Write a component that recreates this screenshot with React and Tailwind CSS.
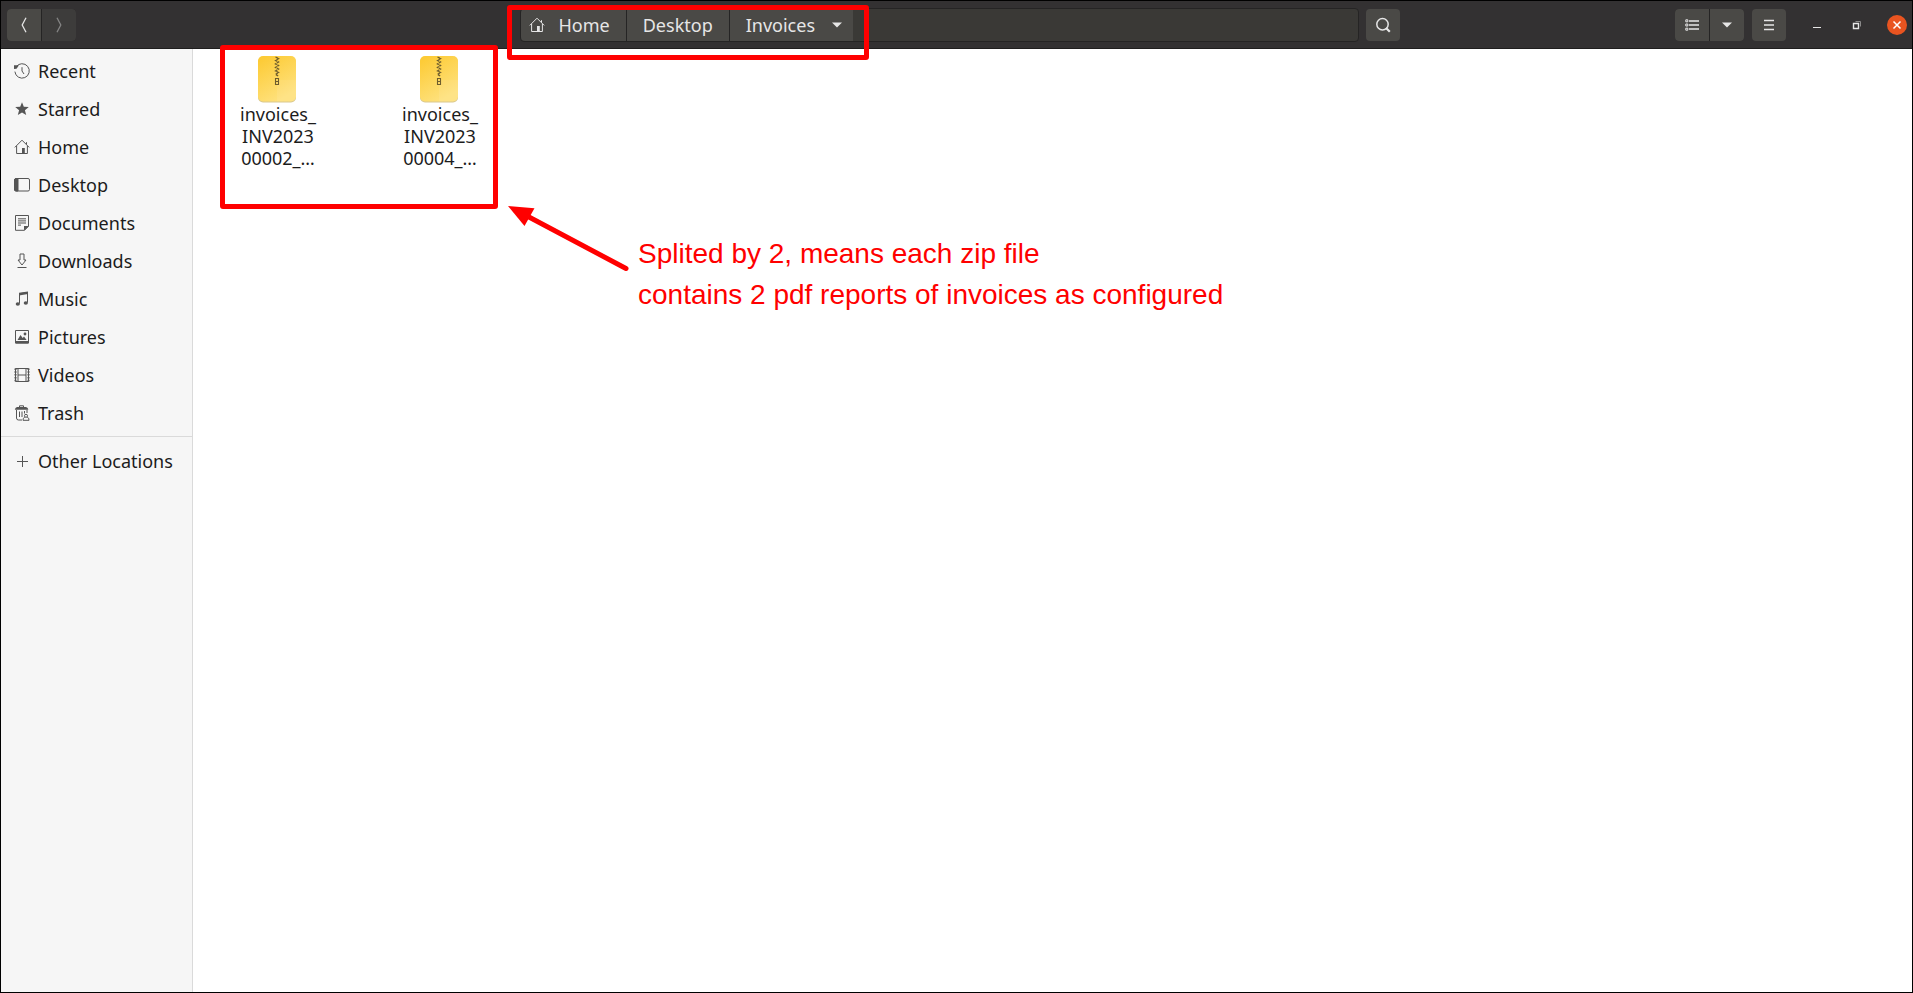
import React from "react";

const Svg = ({ children, size = 16, className = "" }) => (
  <svg width={size} height={size} viewBox="0 0 16 16" fill="none" stroke="currentColor" className={`shrink-0 ${className}`} aria-hidden="true">
    {children}
  </svg>
);

const HouseIcon = () => (
  <Svg>
    <path d="M.8 8.4 8 1.2l7.2 7.2M2.6 7v7.5h10.8V7M12.5 5.4V3.2" />
    <path d="M8 9h2.8v5.5H8z" fill="currentColor" stroke="none" />
  </Svg>
);

const icons = {
  Recent: (
    <Svg>
      <path d="M2.1 3.9A7.2 7.2 0 1 1 .9 8.6M8 4.2V8l2 3" />
      <path d="M0 2.2h5L2.5 5.8 0 6z" fill="currentColor" stroke="none" />
    </Svg>
  ),
  Starred: (
    <Svg>
      <path d="m8 1.2 1.8 4.6 5 .3-3.9 3.1 1.3 4.9L8 11.4l-4.2 2.7 1.3-4.9L1.2 6.1l5-.3z" fill="currentColor" stroke="none" />
    </Svg>
  ),
  Home: <HouseIcon />,
  Desktop: (
    <Svg>
      <rect x=".5" y="1.5" width="15" height="12.5" rx="1.5" />
      <path d="M.5 2.5 1.5 1.5H4v12.5H1.5L.5 13z" fill="currentColor" />
    </Svg>
  ),
  Documents: (
    <Svg>
      <path d="M1.5.5h13v10.8l-4 4h-9zM4 3.8h8M4 5.9h8M4 8h8M4 10.1h3" />
      <path d="M10 15.5V11h4.8z" fill="currentColor" stroke="none" />
    </Svg>
  ),
  Downloads: (
    <Svg>
      <path d="M6 1h4v6h2L8 12 4 7h2zM3.5 14.5h9" />
    </Svg>
  ),
  Music: (
    <Svg>
      <path d="M5.5 12.5V2.7l8-1.2v10" />
      <path d="M5 1.8 14 .5v2.6L5 4.4z" fill="currentColor" stroke="none" />
      <ellipse cx="3.8" cy="13" rx="2.1" ry="1.8" fill="currentColor" stroke="none" />
      <ellipse cx="11.8" cy="12" rx="2.1" ry="1.8" fill="currentColor" stroke="none" />
    </Svg>
  ),
  Pictures: (
    <Svg>
      <path d="M1.5 1.5h13v12.5h-13z" />
      <path d="M1.5 12h13v2.5h-13zM3.5 11l3-5 2.2 3L10 7.6l2.6 3.4z" fill="currentColor" stroke="none" />
      <circle cx="11" cy="5" r="1.4" fill="currentColor" stroke="none" />
    </Svg>
  ),
  Videos: (
    <Svg>
      <path d="M1.5 1.5h13v13h-13zM4 1.5v13M12 1.5v13M4 8h8" />
      <path d="M1.5 1.5v13M14.5 1.5v13" strokeWidth="2" strokeDasharray="1.5 1.3" />
    </Svg>
  ),
  Trash: (
    <Svg>
      <path d="M2.5 5v8q0 2 2 2H8M5.5 2V.8h4V2M5.5 6.5V12M8 6.5V12M10.5 6v2.5M13 5v3" />
      <path d="M.8 4.8 1.5 3 3 2h9l1.7 1 .6 1.8z" fill="currentColor" stroke="none" />
      <circle cx="12" cy="10.8" r="1.5" />
      <path d="M10.8 12.2Q8.800 12.800 9 15.300h6q.3-2.500-1.800-3.100" />
    </Svg>
  ),
  "Other Locations": (
    <Svg>
      <path d="M8.500 3v11M3 8.500h11" />
    </Svg>
  ),
};

const places = ["Recent", "Starred", "Home", "Desktop", "Documents", "Downloads", "Music", "Pictures", "Videos", "Trash"];

const Place = ({ name }) => (
  <li>
    <a href="#" className="flex h-[38px] items-center gap-2 pl-[13px] text-lg text-[#1c1c1c]">
      <span className="text-[#555]">{icons[name]}</span>
      <span className="whitespace-nowrap">{name}</span>
    </a>
  </li>
);

const BarButton = ({ label, className = "", tone = "bg-[#4a4946] text-[#e6e6e6]", children }) => (
  <button aria-label={label} className={`flex h-8 w-[34px] items-center justify-center ${tone} ${className}`}>
    {children}
  </button>
);

const DownArrow = () => (
  <Svg>
    <path d="M3 5.500h10L8 10.500z" fill="currentColor" stroke="none" />
  </Svg>
);

const Header = () => (
  <header className="grid h-12 grid-cols-[1fr_minmax(0,880px)_1fr] items-center border-b border-[#1f1e1e] bg-[#333132] pt-px pl-[6px]">
    <div className="flex">
      <div className="flex gap-px rounded bg-[#252424]">
        <BarButton label="Back" className="rounded-l">
          <Svg><path d="M10 .8 6.200 8l3.800 7.200" strokeWidth="1.300" /></Svg>
        </BarButton>
        <BarButton label="Forward" className="rounded-r" tone="bg-[#3d3c3b] text-[#858585]">
          <Svg><path d="M6 .8 9.800 8 6 15.200" strokeWidth="1.300" /></Svg>
        </BarButton>
      </div>
    </div>

    <div className="flex items-center gap-[7px]">
      <nav aria-label="Path" className="relative flex h-[34px] min-w-0 flex-1 rounded border border-[#252424] bg-[#3a3936] text-lg text-[#e6e6e6]">
        <div className="flex gap-px rounded-l bg-[#252424]">
          <button className="flex items-center gap-[14px] rounded-l bg-[#4a4946] pr-4 pl-2">
            <HouseIcon />
            <span>Home</span>
          </button>
          <button className="bg-[#4a4946] px-4">Desktop</button>
          <button className="flex items-center gap-[14px] bg-[#4a4946] pr-2 pl-4">
            <span>Invoices</span>
            <DownArrow />
          </button>
        </div>
        <div className="pointer-events-none absolute -top-1 -left-[14px] h-[55px] w-[362px] rounded-[3px] border-[5px] border-[#ff0000]" />
      </nav>
      <BarButton label="Search" className="rounded">
        <Svg>
          <circle cx="7.500" cy="7.200" r="5.700" strokeWidth="1.500" />
          <path d="m11 11 3.800 3.800" strokeWidth="2.200" />
        </Svg>
      </BarButton>
    </div>

    <div className="flex items-center justify-end pr-[5px]">
      <div className="flex gap-px rounded bg-[#252424]">
        <BarButton label="List view" className="rounded-l">
          <Svg>
            <path d="M5 4h10M5 8h10M5 12h10" strokeWidth="1.300" />
            <path d="M1.800 2.800h2v2h-2zM1.800 7h2v2h-2zM1.800 11.200h2v2h-2z" />
          </Svg>
        </BarButton>
        <BarButton label="View options" className="rounded-r"><DownArrow /></BarButton>
      </div>
      <BarButton label="Menu" className="ml-2 rounded">
        <Svg><path d="M3 3.500h10M3 8h10M3 12.500h10" strokeWidth="1.400" /></Svg>
      </BarButton>
      <button aria-label="Minimize" className="ml-[23px] flex size-4 items-center justify-center text-[#e6e6e6]">
        <Svg><path d="M4 10.500h8" /></Svg>
      </button>
      <button aria-label="Restore" className="ml-6 flex size-4 items-center justify-center text-[#e6e6e6]">
        <Svg>
          <path d="M4.500 6.500h5v5h-5z" strokeWidth="1.400" />
          <path d="M6.500 4.500h5v5" stroke="#8b8a8a" />
        </Svg>
      </button>
      <button aria-label="Close" className="ml-[22px] flex size-5 items-center justify-center rounded-full bg-[#e95420] text-white">
        <Svg><path d="m4.500 4.500 7 7M11.500 4.500l-7 7" strokeWidth="1.500" /></Svg>
      </button>
    </div>
  </header>
);

const ZipIcon = ({ id }) => (
  <svg width="40" height="48" viewBox="0 0 40 48" aria-hidden="true">
    <defs>
      <linearGradient id={id} x1="0" y1="0" x2=".5" y2="1">
        <stop offset="0" stopColor="#fdc92f" />
        <stop offset="1" stopColor="#fee17c" />
      </linearGradient>
    </defs>
    <rect x="0" y="2" width="38" height="45.500" rx="5" fill="#d9c88f" />
    <rect x="0" y="1" width="38" height="45.500" rx="5" fill={`url(#${id})`} />
    <path d="M19 25h19v16.500a5 5 0 0 1-5 5H19z" fill="#fff" opacity=".08" />
    <path d="m17.500 2 3 1.500-3 2 3 1.500-3 2 3 1.500-3 2 3 1.500-3 2 3 1.500-3 2 3 1.500" fill="none" stroke="#6e5d2d" strokeWidth="1.300" strokeDasharray="2.600 .6" />
    <path d="M17.500 23.500h3v6h-3zM17.500 26.500h3" fill="none" stroke="#6e5d2d" strokeWidth="1.100" />
  </svg>
);

const files = [
  { id: "zip-a", lines: ["invoices_", "INV2023", "00002_…"] },
  { id: "zip-b", lines: ["invoices_", "INV2023", "00004_…"] },
];

export default function App() {
  return (
    <div className="flex min-h-screen flex-col border border-black bg-white font-['Noto_Sans',sans-serif]">
      <Header />
      <div className="flex flex-1">
        <aside className="w-[192px] shrink-0 border-r border-[#dadada] bg-[#f6f6f6] pt-[3px]">
          <ul>
            {places.map((name) => <Place key={name} name={name} />)}
          </ul>
          <ul className="mt-1 border-t border-[#dadada] pt-[5px]">
            <Place name="Other Locations" />
          </ul>
        </aside>

        <main className="relative flex-1">
          <ul className="flex gap-[82px] pt-[6px] pl-[45px]">
            {files.map((file) => (
              <li key={file.id} className="flex w-20 flex-col items-center text-center text-lg leading-[22px] text-[#1c1c1c]">
                <ZipIcon id={file.id} />
                <span className="flex flex-col">
                  {file.lines.map((line) => <span key={line}>{line}</span>)}
                </span>
              </li>
            ))}
          </ul>
          <div className="pointer-events-none absolute -top-1 left-[27px] h-[164px] w-[278px] rounded-[3px] border-[5px] border-[#ff0000]" />
          <svg className="absolute top-[156px] left-[314px]" width="124" height="68" viewBox="0 0 124 68" aria-hidden="true">
            <path d="m1 1 26.500 2.200-10 17.800z" fill="#ff0000" />
            <path d="M21 11.500 119 63.500" stroke="#ff0000" strokeWidth="5" strokeLinecap="round" />
          </svg>
          <p className="absolute top-[184px] left-[445px] font-['Liberation_Sans',Arial,sans-serif] text-[28px] leading-[41px] whitespace-nowrap text-[#ff0000]">
            Splited by 2, means each zip file
            <br />
            contains 2 pdf reports of invoices as configured
          </p>
        </main>
      </div>
    </div>
  );
}
